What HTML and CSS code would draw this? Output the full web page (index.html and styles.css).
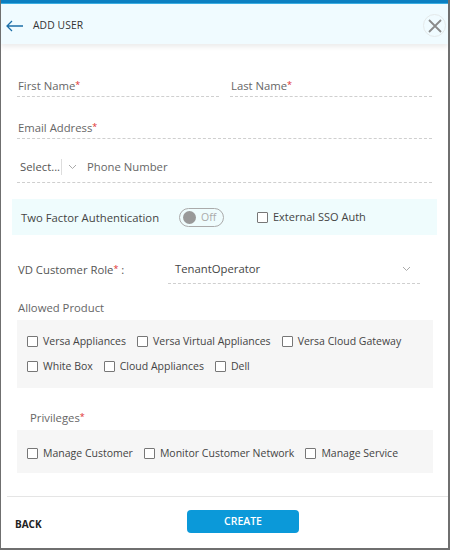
FILE: index.html
```html
<!DOCTYPE html>
<html>
<head>
<meta charset="utf-8">
<link rel="stylesheet" href="styles.css">
</head>
<body>
<div class="frame">
  <div class="topbar"></div>
  <div class="header">
    <svg class="back" width="18" height="12" viewBox="0 0 18 12"><path d="M6 1 L1 6 L6 11 M1 6 H17" fill="none" stroke="#1c6fa8" stroke-width="1.3"/></svg>
    <span class="title">ADD USER</span>
    <span class="close"><svg width="14" height="14" viewBox="0 0 14 14"><path d="M1 1 L13 13 M13 1 L1 13" stroke="#8a8a8a" stroke-width="1.8"/></svg></span>
  </div>
  <div class="body">
    <div class="row two">
      <div class="field"><span class="lbl">First Name<i>*</i></span></div>
      <div class="field"><span class="lbl">Last Name<i>*</i></span></div>
    </div>
    <div class="row">
      <div class="field"><span class="lbl">Email Address<i>*</i></span></div>
    </div>
    <div class="row last">
      <div class="field phone"><span class="sel">Select...</span><span class="vdiv"></span><svg class="chev" width="9" height="6" viewBox="0 0 9 6"><path d="M1 1 L4.5 4.5 L8 1" fill="none" stroke="#aaa" stroke-width="1"/></svg><span class="lbl">Phone Number</span></div>
    </div>
    <div class="tfa">
      <span class="tfa-lbl">Two Factor Authentication</span>
      <span class="toggle"><span class="knob"></span><span class="off">Off</span></span>
      <label class="cb"><span class="box"></span>External SSO Auth</label>
    </div>
    <div class="role">
      <span class="role-lbl">VD Customer Role<i>*</i> :</span>
      <div class="role-sel"><span>TenantOperator</span><svg width="9" height="6" viewBox="0 0 9 6"><path d="M1 1 L4.5 4.5 L8 1" fill="none" stroke="#aaa" stroke-width="1"/></svg></div>
    </div>
    <div class="sec-lbl">Allowed Product</div>
    <div class="panel">
      <div class="cbrow">
        <label class="cb"><span class="box"></span>Versa Appliances</label>
        <label class="cb"><span class="box"></span>Versa Virtual Appliances</label>
        <label class="cb"><span class="box"></span>Versa Cloud Gateway</label>
      </div>
      <div class="cbrow">
        <label class="cb"><span class="box"></span>White Box</label>
        <label class="cb"><span class="box"></span>Cloud Appliances</label>
        <label class="cb"><span class="box"></span>Dell</label>
      </div>
    </div>
    <div class="sec-lbl priv">Privileges<i>*</i></div>
    <div class="panel small">
      <div class="cbrow">
        <label class="cb"><span class="box"></span>Manage Customer</label>
        <label class="cb"><span class="box"></span>Monitor Customer Network</label>
        <label class="cb"><span class="box"></span>Manage Service</label>
      </div>
    </div>
  </div>
  <div class="footer">
    <span class="backbtn">BACK</span>
    <span class="create">CREATE</span>
  </div>
</div>
</body>
</html>
```
FILE: styles.css
```css
* { box-sizing: border-box; }
html, body { margin: 0; padding: 0; }
body { font-family: "Open Sans", "Liberation Sans", sans-serif; color: #444; background: #fff; }
.frame { width: 450px; height: 550px; border: 2px solid #6f6f6f; border-top: none; border-left-width: 1px; position: relative; overflow: hidden; }
.topbar { height: 4px; background: #0b7fc1; border-bottom: 1px solid #3aaee3; margin: 0 -2px 0 -1px; }
.header { height: 40px; background: #f0fbff; display: flex; align-items: center; padding: 2px 2px 0 5px; box-shadow: 0 3px 5px rgba(0,0,0,0.08); position: relative; }
.back { display: block; margin-right: 9px; margin-top: 2px; }
.title { font-size: 10.3px; color: #333; letter-spacing: 0.1px; flex: 1; line-height: 14px; }
.close { width: 23px; height: 23px; border-radius: 50%; border: 1px solid #e4e9ea; display: flex; align-items: center; justify-content: center; margin-top: 1px; }
.body { padding: 33px 16px 0 16px; }
.row { display: flex; gap: 11px; margin-bottom: 22px; }
.row.last { margin-bottom: 0; }
.row.two .field { flex: 1; }
.field { flex: 1; border-bottom: 1px dashed #cfcfcf; height: 20px; display: flex; align-items: flex-start; padding-left: 1px; }
.lbl { font-size: 11.3px; line-height: 16px; color: #666; }
.lbl i, .sec-lbl i, .role-lbl i { color: #e0302f; font-style: normal; font-size: 9px; vertical-align: 2px; }
.row:nth-child(2) { margin-bottom: 20px; }
.field.phone { height: 24px; align-items: flex-start; padding-left: 3px; }
.sel { font-size: 11.3px; line-height: 16px; color: #555; }
.vdiv { width: 1px; height: 16px; background: #ddd; margin: 0 6px 0 1px; }
.chev { margin: 5px 10px 0 0; }
.tfa { margin: 16px -5px 0 -5px; height: 36px; background: #effcfd; display: flex; align-items: center; padding-left: 9px; }
.tfa-lbl { font-size: 11.3px; color: #444; width: 158px; }
.toggle { width: 45px; height: 19px; border: 1px solid #aaa; border-radius: 10px; display: flex; align-items: center; padding-left: 3px; }
.knob { width: 13px; height: 13px; border-radius: 50%; background: #999; }
.off { font-size: 10.5px; color: #aaa; margin-left: 5px; }
.tfa .cb { margin-left: 33px; color: #444; font-size: 11px; }
.cb { display: flex; align-items: center; font-size: 10.5px; color: #444; line-height: 14px; }
.box { width: 11px; height: 11px; border: 1px solid #777; border-radius: 1px; margin-right: 5px; background: #fff; }
.role { display: flex; align-items: flex-start; margin-top: 26px; padding-left: 1px; height: 23px; }
.role-lbl { font-size: 11.3px; line-height: 16px; color: #555; width: 150px; }
.role-sel { width: 252px; height: 23px; border-bottom: 1px dashed #cfcfcf; display: flex; justify-content: space-between; align-items: flex-start; padding: 0 9px 0 7px; }
.role-sel span { font-size: 11.3px; line-height: 16px; color: #444; }
.role-sel svg { margin-top: 5px; }
.sec-lbl { font-size: 11.3px; line-height: 16px; color: #666; margin-top: 16px; padding-left: 1px; }
.panel { margin-top: 4px; width: 416px; background: #f6f6f6; padding: 14px 0 0 10px; height: 68px; }
.cbrow { display: flex; gap: 11px; margin-bottom: 11px; }
.sec-lbl.priv { margin-top: 21px; padding-left: 13px; }
.panel.small { height: 43px; padding-top: 16px; }
.footer { position: absolute; left: 6px; right: 0; top: 496px; border-top: 1px solid #e5e5e5; height: 52px; display: flex; align-items: center; padding-left: 8px; }
.backbtn { font-size: 10px; font-weight: bold; color: #222; width: 172px; margin-top: 2px; }
.create { width: 112px; height: 23px; background: #0b99d9; border-radius: 4px; color: #fff; font-size: 10.5px; font-weight: 600; display: flex; align-items: center; justify-content: center; margin-top: -3px; }
```
